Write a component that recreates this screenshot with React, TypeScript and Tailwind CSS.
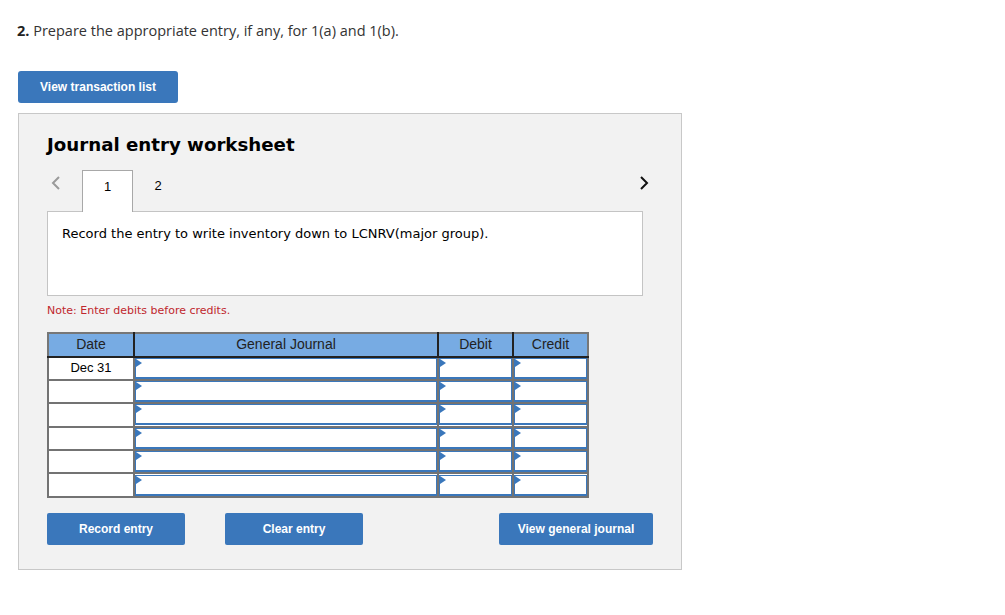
import React from "react";

const rows = ["Dec 31", "", "", "", "", ""];

function Flag() {
  return (
    <span className="absolute left-0 top-0 w-0 h-0 border-y-[4px] border-y-transparent border-l-[6px] border-l-[#3a77bb]" />
  );
}

export default function App() {
  return (
    <div className="w-[1005px] h-[615px] bg-white font-['Liberation_Sans',Arial,sans-serif] text-[#333] relative">
      <div className="pt-[21px] pl-[17px]">
        <p className="text-[14.5px] font-['Open_Sans',sans-serif] text-[#333] leading-5">
          <span className="font-bold text-[#222]">2.</span> Prepare the appropriate entry, if any, for 1(a) and 1(b).
        </p>
        <button className="mt-[30px] ml-px w-[160px] h-[32px] rounded-[3px] bg-[#3a77bb] text-white text-[12px] font-bold">
          View transaction list
        </button>
      </div>

      <div className="ml-[18px] mt-[10px] w-[664px] h-[457px] bg-[#f2f2f2] border border-[#c8c8c8] pl-[28px] pr-[38px]">
        <h2 className="mt-[19px] text-[18.2px] font-bold text-black font-['DejaVu_Sans',Verdana,sans-serif] leading-6">
          Journal entry worksheet
        </h2>

        <div className="mt-[12px] flex items-start h-[42px] relative">
          <span className="w-[35px] pl-[4px] pt-[7px] leading-none">
            <svg width="10" height="14" viewBox="0 0 10 14"><path d="M8 1 L2 7 L8 13" stroke="#9a9a9a" strokeWidth="2" fill="none" /></svg>
          </span>
          <div className="w-[51px] h-[42px] bg-white border border-b-0 border-[#a8a8a8] flex justify-center pt-[6px] text-[13px] text-black relative top-px z-10">
            1
          </div>
          <div className="w-[50px] h-[42px] flex justify-center pt-[7px] text-[13px] text-black">2</div>
          <span className="absolute right-[-8px] top-[7px] w-[12px]">
            <svg width="10" height="14" viewBox="0 0 10 14"><path d="M2 1 L8 7 L2 13" stroke="#111" strokeWidth="2" fill="none" /></svg>
          </span>
        </div>

        <div className="w-[596px] h-[85px] bg-white border border-[#c4c4c4] px-[14px] pt-[12px] text-[13px] text-black font-['DejaVu_Sans',Verdana,sans-serif]">
          Record the entry to write inventory down to LCNRV(major group).
        </div>

        <p className="mt-[7px] text-[11px] text-[#c0272d] font-['DejaVu_Sans',Verdana,sans-serif]">
          Note: Enter debits before credits.
        </p>

        <table className="mt-[12px] border-collapse border-2 border-[#777] text-[14px] text-[#222]">
          <thead>
            <tr className="h-[24px] bg-[#77abe3]">
              <th className="w-[86px] border border-[#777] border-b-2 border-b-[#222] border-r-2 border-r-[#222] font-normal">Date</th>
              <th className="w-[304px] border border-[#777] border-b-2 border-b-[#222] border-r-2 border-r-[#222] font-normal">General Journal</th>
              <th className="w-[75px] border border-[#777] border-b-2 border-b-[#222] border-r-2 border-r-[#222] font-normal">Debit</th>
              <th className="w-[75px] border border-[#777] border-b-2 border-b-[#222] font-normal">Credit</th>
            </tr>
          </thead>
          <tbody>
            {rows.map((d, i) => (
              <tr key={i} className="h-[23.4px] bg-white">
                <td className="border-2 border-[#737373] text-center text-[13px] text-black">{d}</td>
                {[0, 1, 2].map((c) => (
                  <td key={c} className="border-2 border-[#737373] p-0">
                    <div className="relative h-[21px] border border-b-2 border-[#3a77bb] bg-white">
                      <Flag />
                    </div>
                  </td>
                ))}
              </tr>
            ))}
          </tbody>
        </table>

        <div className="mt-[15px] flex">
          <button className="shrink-0 w-[138px] h-[32px] rounded-[2px] bg-[#3a77bb] text-white text-[12px] font-bold">
            Record entry
          </button>
          <button className="shrink-0 ml-[40px] w-[138px] h-[32px] rounded-[2px] bg-[#3a77bb] text-white text-[12px] font-bold">
            Clear entry
          </button>
          <button className="shrink-0 ml-[136px] w-[154px] h-[32px] rounded-[2px] bg-[#3a77bb] text-white text-[12px] font-bold">
            View general journal
          </button>
        </div>
      </div>
    </div>
  );
}
